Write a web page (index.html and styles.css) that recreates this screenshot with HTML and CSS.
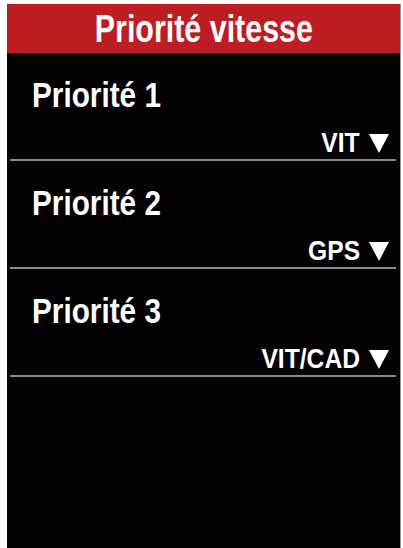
FILE: index.html
```html
<!DOCTYPE html>
<html lang="fr">
<head>
<meta charset="utf-8">
<title>Priorité vitesse</title>
<link rel="stylesheet" href="styles.css">
</head>
<body>
<div class="screen">
  <header class="title"><span class="title-text">Priorité vitesse</span></header>
  <div class="list">
    <div class="row">
      <div class="label"><span class="label-text">Priorité 1</span></div>
      <div class="value"><span class="value-text">VIT</span><svg class="arrow" viewBox="0 0 20 20"><polygon points="0,1 20,1 10,20" /></svg></div>
    </div>
    <div class="row">
      <div class="label"><span class="label-text">Priorité 2</span></div>
      <div class="value"><span class="value-text">GPS</span><svg class="arrow" viewBox="0 0 20 20"><polygon points="0,1 20,1 10,20" /></svg></div>
    </div>
    <div class="row">
      <div class="label"><span class="label-text">Priorité 3</span></div>
      <div class="value"><span class="value-text">VIT/CAD</span><svg class="arrow" viewBox="0 0 20 20"><polygon points="0,1 20,1 10,20" /></svg></div>
    </div>
  </div>
</div>
</body>
</html>
```
FILE: styles.css
```css
html, body {
  margin: 0;
  padding: 0;
  background: #ffffff;
}
body {
  width: 403px;
  height: 548px;
  overflow: hidden;
  font-family: "Liberation Sans", Arial, sans-serif;
  font-weight: bold;
  color: #ffffff;
}
.screen {
  margin: 4px 2px 0 7px;
  height: 544px;
  background: #050203;
  border-right: 1px solid #9a9a9a;
  display: flex;
  flex-direction: column;
}
.title {
  height: 49px;
  line-height: 49px;
  background: #bd1e24;
  text-align: center;
  font-size: 39px;
}
.title-text {
  display: inline-block;
  transform: scaleX(0.78);
  transform-origin: center;
}
.list {
  display: flex;
  flex-direction: column;
}
.row {
  margin: 0 4px 0 3px;
  padding: 24px 0 2px 0;
  border-bottom: 2px solid #8a8a8a;
  display: flex;
  flex-direction: column;
}
.label {
  padding-left: 22px;
  font-size: 35px;
  line-height: 35px;
}
.label-text {
  display: inline-block;
  transform: scaleX(0.85);
  transform-origin: left center;
}
.value {
  margin-top: 17px;
  padding-right: 7px;
  font-size: 28px;
  line-height: 28px;
  display: flex;
  justify-content: flex-end;
  align-items: center;
  gap: 9px;
}
.value-text {
  display: inline-block;
  transform: scaleX(0.88);
  transform-origin: right center;
}
.arrow {
  width: 20px;
  height: 20px;
  fill: #ffffff;
}
```
